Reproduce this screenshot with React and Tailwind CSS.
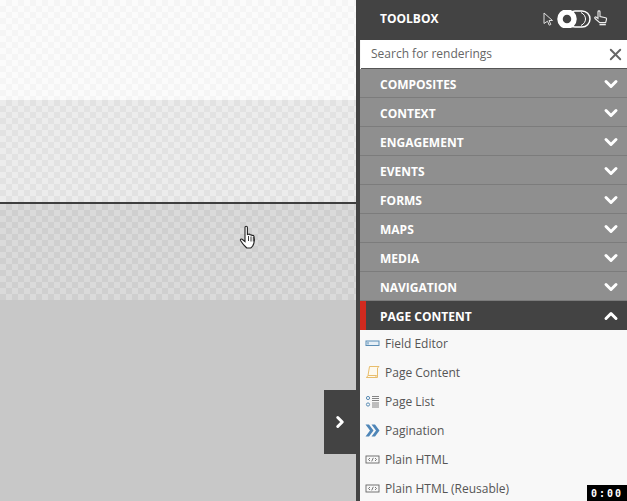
import React from 'react';
import { ChevronDown, ChevronUp, ChevronRight, X } from 'lucide-react';

const groups = ['COMPOSITES', 'CONTEXT', 'ENGAGEMENT', 'EVENTS', 'FORMS', 'MAPS', 'MEDIA', 'NAVIGATION'];

const FieldEditorIcon = () => (
  <svg width="15" height="15" viewBox="0 0 15 15" fill="none">
    <rect x="1" y="5" width="13" height="4.500" fill="#e6eff6" stroke="#5b8db5" />
    <path d="M3 6v2.500" stroke="#5b8db5" />
  </svg>
);

const PageContentIcon = () => (
  <svg width="15" height="15" viewBox="0 0 15 15" fill="none" stroke="#e8bd6c">
    <path d="M4.500 1.500h9.500l-1.500 1.500v9.500H1.500l1.500-2z" fill="#fdf9ee" />
    <path d="M1.500 12.500h9l1-2H3" />
  </svg>
);

const PageListIcon = () => (
  <svg width="15" height="15" viewBox="0 0 15 15" fill="none">
    <circle cx="3" cy="4" r="1.600" stroke="#5b8db5" />
    <circle cx="3" cy="10.500" r="1.600" stroke="#5b8db5" />
    <path d="M7 2.500h7M7 4.500h7M7 6.500h7M7 9h7M7 11h7M7 13h7" stroke="#777" strokeWidth="0.9" />
  </svg>
);

const PaginationIcon = () => (
  <svg width="15" height="15" viewBox="0 0 15 15" fill="#4f86b8">
    <path d="M0.500 1.500h3.500l4.500 6-4.500 6H0.500l4.500-6z" />
    <path d="M6.500 1.500H10l4.500 6-4.500 6H6.500l4.500-6z" />
  </svg>
);

const HtmlIcon = () => (
  <svg width="15" height="15" viewBox="0 0 15 15" fill="none" stroke="#666" strokeWidth="0.9">
    <rect x="1" y="4" width="13" height="7" />
    <path d="M5 6l-1.500 1.500L5 9M10 6l1.500 1.500L10 9M8.300 5.800l-1.600 3.600" />
  </svg>
);

const ArrowIcon = () => (
  <svg width="11" height="14" viewBox="0 0 11 14" fill="none" stroke="#dddddd" strokeWidth="1">
    <path d="M1 1l8.500 7.500H6l1.800 4-1.600.7L4.500 9.200 1 11.500z" />
  </svg>
);

const ToggleIcon = () => (
  <svg width="34" height="18" viewBox="0 0 34 18" fill="none">
    <rect x="10" y="1" width="23" height="16" rx="8" stroke="#ffffff" strokeWidth="1.500" />
    <path d="M24 2.500c3 1.500 4.500 4 4.500 6.500s-1.500 5-4.500 6.500" stroke="#ffffff" />
    <circle cx="10" cy="9" r="7" fill="#434343" stroke="#ffffff" strokeWidth="5.500" />
  </svg>
);

const HandIcon = () => (
  <svg width="14" height="17" viewBox="0 0 14 17" fill="none" stroke="#eeeeee" strokeWidth="1.100">
    <path d="M4 1.800c0-1.200 2-1.200 2 0v4.700l5.500 1.200c.7.200 1.200.8 1 1.600l-.8 3.200H5.500L1 8.500c-.8-1 .4-2 1.300-1.300L4 8.500z" />
    <path d="M5.500 14.500h6.300" strokeWidth="1.600" />
  </svg>
);

const items = [
  { label: 'Field Editor', icon: FieldEditorIcon },
  { label: 'Page Content', icon: PageContentIcon },
  { label: 'Page List', icon: PageListIcon },
  { label: 'Pagination', icon: PaginationIcon },
  { label: 'Plain HTML', icon: HtmlIcon },
  { label: 'Plain HTML (Reusable)', icon: HtmlIcon },
];

const checkerLight = 'bg-[conic-gradient(#f5f5f5_25%,#fbfbfb_0_50%,#f5f5f5_0_75%,#fbfbfb_0)] bg-[length:12px_12px]';
const checkerMid = 'bg-[conic-gradient(#e2e2e2_25%,#ececec_0_50%,#e2e2e2_0_75%,#ececec_0)] bg-[length:12px_12px]';
const checkerDark = 'bg-[conic-gradient(#cfcfcf_25%,#dadada_0_50%,#cfcfcf_0_75%,#dadada_0)] bg-[length:12px_12px]';

const App = () => {
  return (
    <div className="relative flex h-[501px] w-[627px] overflow-hidden font-['Open_Sans',sans-serif]">
      {/* Canvas */}
      <div className="flex w-[356px] flex-col bg-[#c8c8c8]">
        <div className={`h-[100px] ${checkerLight}`} />
        <div className={`h-[102px] ${checkerMid}`} />
        <div className="h-[2px] bg-[#3f3f3f]" />
        <div className={`h-[96px] ${checkerDark}`} />
      </div>

      {/* Toolbox */}
      <div className="flex w-[271px] flex-col border-l-4 border-[#434343] bg-[#f8f8f8]">
        <div className="flex h-10 shrink-0 items-center justify-between bg-[#434343] pl-5 pr-[19px]">
          <span className="pb-[3px] text-xs font-bold text-white">TOOLBOX</span>
          <div className="flex items-center gap-[3px] pb-[3px]">
            <ArrowIcon />
            <ToggleIcon />
            <HandIcon />
          </div>
        </div>

        <div className="ml-px flex h-[29px] shrink-0 items-center justify-between border-b border-[#555555] bg-white pl-[10px] pr-[2px]">
          <span className="text-xs text-[#666666]">Search for renderings</span>
          <X size={19} strokeWidth={2.400} className="text-[#666666]" />
        </div>

        {groups.map(name => (
          <div key={name} className="flex h-[29px] shrink-0 items-center justify-between border-b border-[#7c7c7c] bg-[#8f8f8f] pl-5 pr-[6px] pt-[3px]">
            <span className="text-xs font-bold text-white">{name}</span>
            <ChevronDown size={20} strokeWidth={3.600} className="-translate-y-px text-white" />
          </div>
        ))}

        <div className="flex h-[29px] shrink-0 items-center justify-between border-l-[6px] border-[#d12a1f] bg-[#434343] pl-[14px] pr-[6px] pt-[2px]">
          <span className="text-xs font-bold text-white">PAGE CONTENT</span>
          <ChevronUp size={20} strokeWidth={3.600} className="-translate-y-px text-white" />
        </div>

        {items.map(({ label, icon: Icon }) => (
          <div key={label} className="flex h-[29px] shrink-0 items-center gap-[5px] pb-[2px] pl-[5px] text-xs text-[#555555]">
            <Icon />
            <span>{label}</span>
          </div>
        ))}
      </div>

      {/* Collapse handle */}
      <div className="absolute left-[324px] top-[390px] flex h-16 w-8 items-center justify-center bg-[#434343]">
        <ChevronRight size={18} strokeWidth={4} className="text-white" />
      </div>

      {/* Mouse cursor */}
      <svg className="absolute left-[239px] top-[225px]" width="20" height="26" viewBox="0 0 20 26">
        <path
          d="M6 2.500c0-1.600 2.400-1.600 2.400 0v7l1.200-.3c.8-.2 1.400.2 1.600.7.8-.3 1.500 0 1.800.6.8-.3 1.700.1 2 .9.600 2 .4 5-.2 7.100-.5 2-1.600 3.500-3 4.500H7.800C6 21.500 3 18 1.500 15.500c-.5-1 .6-2 1.600-1.300L6 16.500z"
          fill="#fff"
          stroke="#222"
          strokeWidth="1.100"
        />
        <path d="M9.500 11v5M12 11.500v5M14.300 12v4.500" stroke="#222" strokeWidth="0.9" fill="none" />
      </svg>

      {/* Timer */}
      <div className="absolute bottom-0 right-0 flex h-4 w-10 items-center justify-center bg-black font-['DejaVu_Sans_Mono',monospace] text-[10px] font-bold tracking-[2px] text-white">
        0:00
      </div>
    </div>
  );
};

export default App;
